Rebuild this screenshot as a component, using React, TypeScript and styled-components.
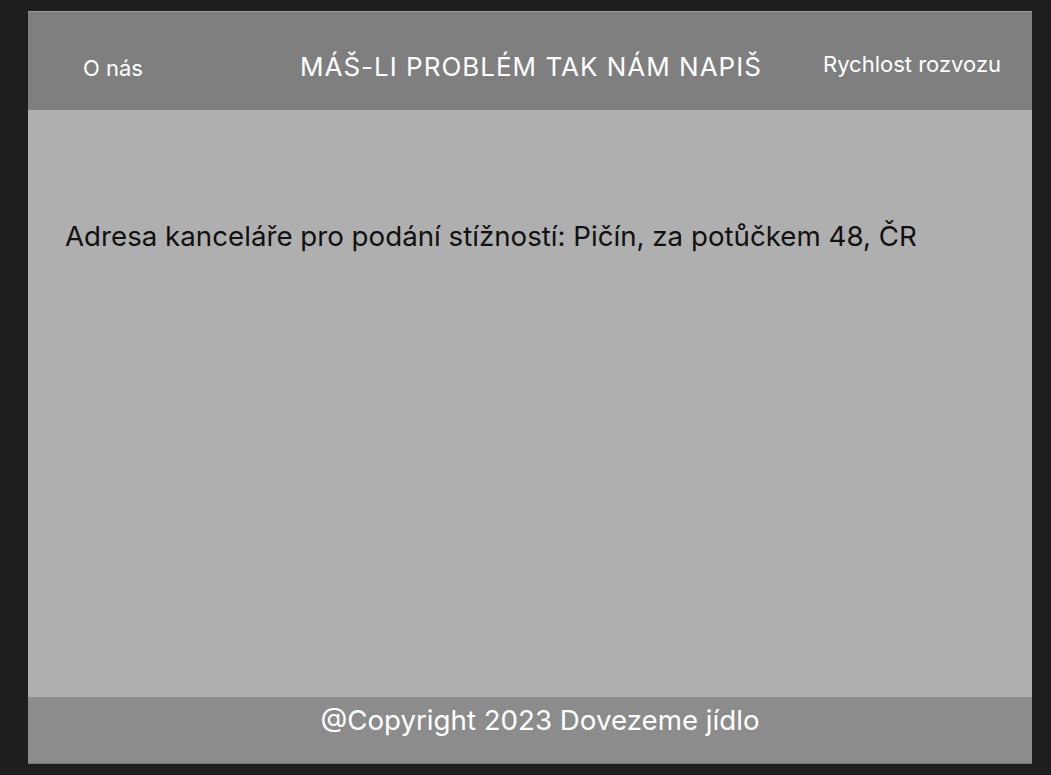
import React from "react";
import styled, { createGlobalStyle } from "styled-components";

const Global = createGlobalStyle`
  html, body { margin: 0; padding: 0; background: #1e1e1e; }
  body { font-family: Inter, "Noto Sans", sans-serif; }
`;

const Frame = styled.div`
  margin: 11px 0 0 28px;
  width: 1004px;
  height: 753px;
  display: flex;
  flex-direction: column;
  border-top: 1px solid #9c9c9c;
  box-sizing: border-box;
`;

const Header = styled.header`
  height: 98px;
  background: #7f7f7f;
  display: grid;
  grid-template-columns: 272px 523px 1fr;
  align-items: center;
  color: #ffffff;
`;

const NavLink = styled.span<{ $size: number; $shift: number; $pad: number; $spacing?: number }>`
  font-size: ${(p) => p.$size}px;
  letter-spacing: ${(p) => p.$spacing ?? 0}px;
  padding-left: ${(p) => p.$pad}px;
  position: relative;
  top: ${(p) => p.$shift}px;
  white-space: nowrap;
`;

const Main = styled.main`
  flex: 1;
  background: #afafaf;
  padding: 109px 0 0 37px;
`;

const Address = styled.p`
  margin: 0;
  font-size: 27.7px;
  color: #111111;
`;

const Footer = styled.footer`
  height: 67px;
  background: #8c8c8c;
  display: flex;
  justify-content: center;
  color: #ffffff;
  font-size: 27.7px;
  padding: 6px 0 0 20px;
  box-sizing: border-box;
  border-bottom: 1px solid #777;
`;

export default function App() {
  return (
    <>
      <Global />
      <Frame>
        <Header>
          <NavLink $size={22} $shift={7} $pad={55}>O nás</NavLink>
          <NavLink $size={26} $shift={5} $pad={0} $spacing={1}>MÁŠ-LI PROBLÉM TAK NÁM NAPIŠ</NavLink>
          <NavLink $size={22} $shift={3} $pad={0}>Rychlost rozvozu</NavLink>
        </Header>
        <Main>
          <Address>Adresa kanceláře pro podání stížností: Pičín, za potůčkem 48, ČR</Address>
        </Main>
        <Footer>@Copyright 2023 Dovezeme jídlo</Footer>
      </Frame>
    </>
  );
}
